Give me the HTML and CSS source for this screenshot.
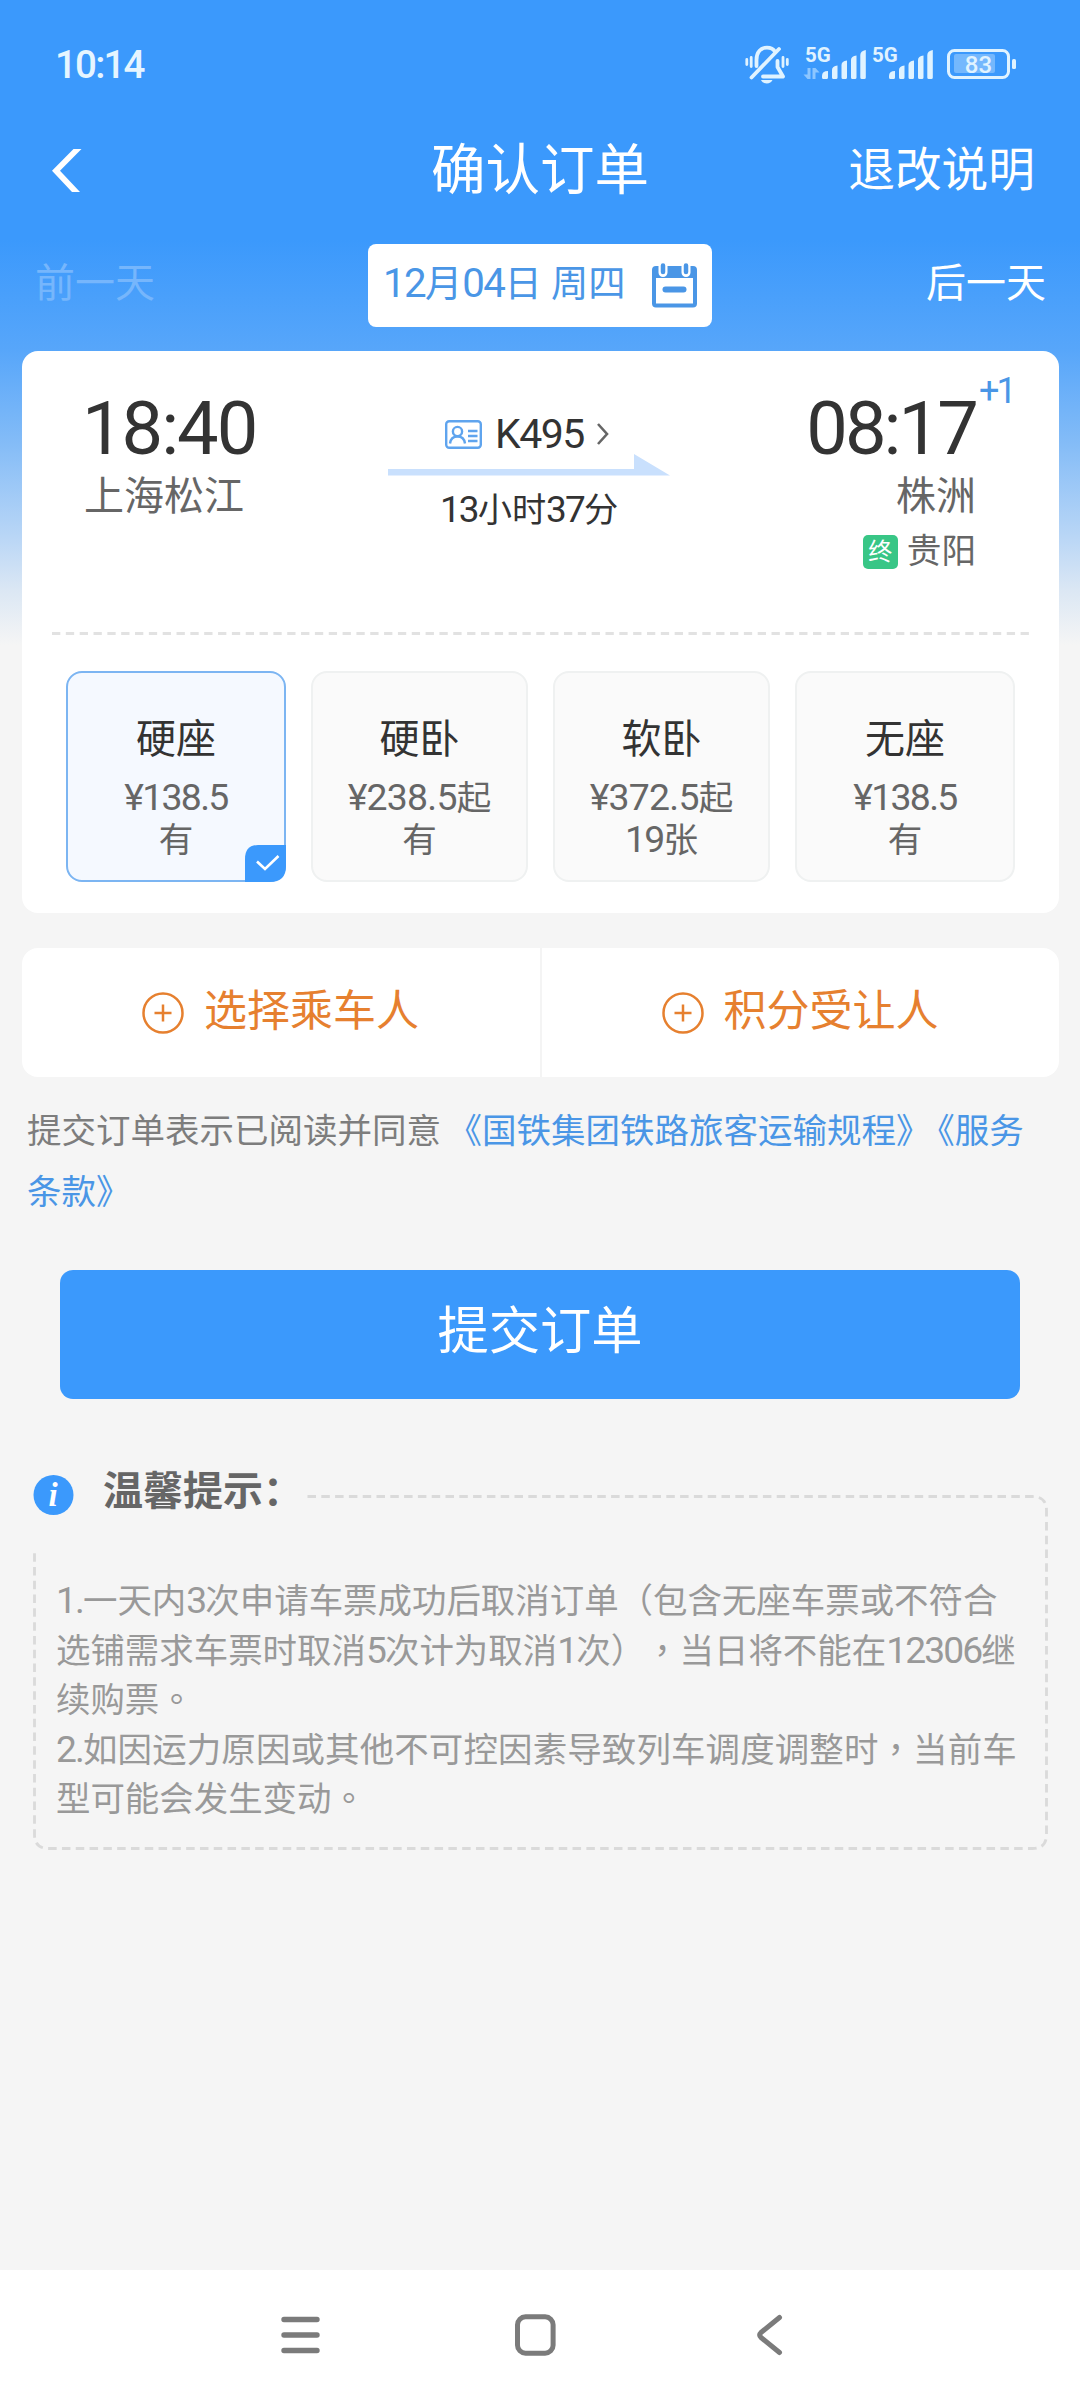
FILE: index.html
```html
<!DOCTYPE html>
<html lang="zh-CN">
<head>
<meta charset="utf-8">
<meta name="viewport" content="width=1080">
<title>确认订单</title>
<link rel="stylesheet" href="styles.css">
</head>
<body>
<div class="screen">
  <header class="status-bar">
    <span class="clock">10:14</span>
    <svg class="status-icons" width="272" height="40" viewBox="745 45 272 40" fill="none" stroke="none">
      <g stroke="#e0f3ff" stroke-width="3.8" stroke-linecap="round">
        <path d="M746.8 59.5v5M751.2 57.500v9M783 57.500v9M787.300 59.500v5" stroke-width="2.8"/>
        <path d="M756.500 66V60c0-8 4.500-12.300 10.500-12.300 3.500 0 6.500 1.500 8 4"/>
        <path d="M779 49 751.500 77.500"/>
        <path d="M777.500 61v6l5.500 9.500h-20" stroke-linejoin="round"/>
      </g>
      <path d="M761 80h11.500c-1 2.300-3 3.500-5.700 3.500s-4.800-1.200-5.800-3.500z" fill="#e0f3ff"/>
      <text class="net" x="805" y="61.800">5G</text>
      <text class="net" x="872" y="61.800">5G</text>
      <g fill="#8cc6ff">
        <path d="M807.500 68h3v11h-3l-4-4.500h4zM812.500 68h3l4 4.500h-4V79h-3z"/>
      </g>
      <g fill="#e0f3ff">
        <path d="M822 76q0-5 6-5v6.500q0 1.500-1.500 1.500h-3q-1.500 0-1.500-1.500zM832 70q0-4 5.500-4.500v12q0 1.500-1.500 1.500h-2.500q-1.500 0-1.500-1.500zM841.500 65q0-4 5.500-4.500v17q0 1.500-1.500 1.500H843q-1.500 0-1.500-1.500zM851 60q0-4 5.500-4.500v22q0 1.500-1.500 1.500h-2.500q-1.500 0-1.500-1.500zM860.300 55q0-4 5.500-5v27.500q0 1.500-1.500 1.500h-2.500q-1.500 0-1.500-1.500z"/>
        <path d="M889 76q0-5 6-5v6.500q0 1.500-1.500 1.500h-3q-1.500 0-1.500-1.500zM899 70q0-4 5.500-4.500v12q0 1.500-1.500 1.500h-2.500q-1.500 0-1.500-1.500zM908.500 65q0-4 5.500-4.500v17q0 1.500-1.500 1.500H910q-1.500 0-1.500-1.500zM918 60q0-4 5.500-4.500v22q0 1.500-1.500 1.500h-2.500q-1.500 0-1.500-1.500zM927.300 55q0-4 5.500-5v27.500q0 1.500-1.500 1.500h-2.500q-1.500 0-1.500-1.500z"/>
        <rect x="1012" y="59" width="4" height="10" rx="1.500"/>
      </g>
      <rect x="948.500" y="50.500" width="60" height="27" rx="6" stroke="#e0f3ff" stroke-width="3"/>
      <rect x="954" y="54" width="41" height="19" rx="2" fill="#74b8fd"/>
      <text class="level" x="978.500" y="73" text-anchor="middle">83</text>
    </svg>
  </header>

  <nav class="title-bar">
    <svg class="back" width="30" height="43" viewBox="0 0 30 43"><path d="M21.500 0H29.500L8 21.800 28 43H20L0 21.800z" fill="#fff"/></svg>
    <h1 class="title">确认订单</h1>
    <span class="rules">退改说明</span>
  </nav>

  <div class="date-row">
    <span class="day day-off">前一天</span>
    <div class="date-box">
      <span class="date"><span class="num">12</span>月<span class="num">04</span>日 周四</span>
      <svg width="45" height="45" viewBox="0 0 45 45">
        <rect x="2" y="5" width="41" height="37.500" rx="2" fill="#fff" stroke="#4a96e6" stroke-width="4"/>
        <path d="M2 4h41v11H2z" fill="#4a96e6"/>
        <path d="M11 1v8.500M34 1v8.500" stroke="#fff" stroke-width="9" stroke-linecap="round"/>
        <path d="M11 2.500v6.500M34 2.500v6.500" stroke="#4a96e6" stroke-width="4.500" stroke-linecap="round"/>
        <path d="M13.500 26.500h18" stroke="#4a96e6" stroke-width="6" stroke-linecap="round"/>
      </svg>
    </div>
    <span class="day">后一天</span>
  </div>

  <section class="card trip-card">
    <div class="trip">
      <div class="stop stop-start">
        <div class="time">18:40</div>
        <div class="station">上海松江</div>
      </div>
      <div class="train">
        <div class="train-no">
          <svg width="37" height="29" viewBox="0 0 37 29" fill="none" stroke="#5fa4ee" stroke-width="2.400">
            <rect x="1.200" y="1.200" width="34.600" height="26.600" rx="3"/>
            <circle cx="12.500" cy="11.500" r="4.600"/>
            <path d="M5 23.500c.5-4 3-7 7.500-7s7 3 7.500 7M23 11h9.500M23 16h9.500M23 21h9.500"/>
          </svg>
          <span class="code">K495</span>
          <svg width="12" height="22" viewBox="0 0 12 22" fill="none" stroke="#666" stroke-width="2.600"><path d="M1 1l9 10-9 10"/></svg>
        </div>
        <svg class="arrow" width="282" height="22" viewBox="0 0 282 22"><path d="M0 15h246V0l36 21.500H0z" fill="#c9e0fd"/></svg>
        <div class="duration"><span class="num">13</span>小时<span class="num">37</span>分</div>
      </div>
      <div class="stop stop-end">
        <div class="time">08:17<sup class="plus">+1</sup></div>
        <div class="station">株洲</div>
        <div class="terminal"><span class="badge">终</span>贵阳</div>
      </div>
    </div>
    <svg class="divider" width="977" height="3" viewBox="0 0 977 3"><path d="M0 1.500h977" stroke="#e2e2e2" stroke-width="3" stroke-dasharray="8.300 5.537"/></svg>
    <div class="seats">
      <div class="seat seat-on">
        <div class="seat-name">硬座</div>
        <div class="seat-info"><span class="num tight">¥138.5</span></div>
        <div class="seat-info">有</div>
        <svg class="tick" width="41" height="37" viewBox="0 0 41 37"><path d="M0 14Q0 0 13 0h28v21q0 16-16 16H0z" fill="#3b99fc"/><path d="M12 16.500l8 7.500 13.500-13" fill="none" stroke="#fff" stroke-width="2.600"/></svg>
      </div>
      <div class="seat">
        <div class="seat-name">硬卧</div>
        <div class="seat-info"><span class="num">¥238.5</span>起</div>
        <div class="seat-info">有</div>
      </div>
      <div class="seat">
        <div class="seat-name">软卧</div>
        <div class="seat-info"><span class="num">¥372.5</span>起</div>
        <div class="seat-info"><span class="num tight">19</span>张</div>
      </div>
      <div class="seat">
        <div class="seat-name">无座</div>
        <div class="seat-info"><span class="num tight">¥138.5</span></div>
        <div class="seat-info">有</div>
      </div>
    </div>
  </section>

  <section class="card people">
    <div class="pick">
      <svg width="42" height="42" viewBox="0 0 42 42" fill="none" stroke="#e6802f" stroke-width="2.500"><circle cx="21" cy="21" r="19.500"/><path d="M12.500 21h17M21 12.500v17"/></svg>
      <span>选择乘车人</span>
    </div>
    <div class="pick">
      <svg width="42" height="42" viewBox="0 0 42 42" fill="none" stroke="#e6802f" stroke-width="2.500"><circle cx="21" cy="21" r="19.500"/><path d="M12.500 21h17M21 12.500v17"/></svg>
      <span>积分受让人</span>
    </div>
  </section>

  <p class="agree">提交订单表示已阅读并同意 <a>《国铁集团铁路旅客运输规程》</a><a class="terms">《服务<br>条款》</a></p>

  <button class="submit" type="button">提交订单</button>

  <section class="tips">
    <svg class="frame" width="1017" height="356" viewBox="0 0 1017 356" fill="none" stroke="#dadada" stroke-width="2.800" stroke-dasharray="8.500 5.300">
      <path d="M274.500 1.500H999.500q14 0 14 14V339.500q0 14-14 14H15.500q-14 0-14-14V58"/>
    </svg>
    <h2 class="tips-title">
      <svg width="41" height="40" viewBox="0 0 41 40"><circle cx="20.500" cy="20" r="20" fill="#3b99fc"/><text class="info" x="20" y="31" text-anchor="middle">i</text></svg>
      <span>温馨提示：</span>
    </h2>
    <div class="tips-body">
      <div><span class="num">1.</span>一天内<span class="num">3</span>次申请车票成功后取消订单（包含无座车票或不符合</div>
      <div>选铺需求车票时取消<span class="num">5</span>次计为取消<span class="num">1</span>次）<span class="mid" lang="zh-TW">，</span>当日将不能在<span class="num">12306</span>继</div>
      <div>续购票<span class="mid" lang="zh-TW">。</span></div>
      <div class="loose"><span class="num">2.</span>如因运力原因或其他不可控因素导致列车调度调整时<span class="mid" lang="zh-TW">，</span>当前车</div>
      <div>型可能会发生变动<span class="mid" lang="zh-TW">。</span></div>
    </div>
  </section>

  <footer class="nav-keys">
    <svg width="39" height="42" viewBox="0 0 39 42" stroke="#7b7b7b" stroke-width="5.400" stroke-linecap="round"><path d="M3 5.500h33M3 21h33M3 36.500h33"/></svg>
    <svg width="41" height="42" viewBox="0 0 41 42" fill="none" stroke="#7b7b7b" stroke-width="5.000"><rect x="2.500" y="2.800" width="35.600" height="36.400" rx="8"/></svg>
    <svg width="26" height="42" viewBox="0 0 26 42" fill="none" stroke="#7b7b7b" stroke-width="5" stroke-linecap="round" stroke-linejoin="round"><path d="M22.500 3.500L4 18.500Q1.500 21 4 23.500L22.500 38.500"/></svg>
  </footer>
</div>
</body>
</html>
```
FILE: styles.css
```css
* { box-sizing: border-box; }
body {
  margin: 0;
  background: #f5f5f5;
  font-family: Roboto, "Noto Sans CJK SC", sans-serif;
  font-size: 34.6px;
  color: #333;
}
h1, h2, p { margin: 0; font-weight: 400; }
svg { display: block; flex: none; overflow: visible; }
.screen {
  display: flex;
  flex-direction: column;
  width: 1080px;
  height: 2400px;
  background: linear-gradient(#3b99fc 0, #3b99fc 240px, #57a6fa 350px, #82bbf7 440px, #bbd7f6 540px, #dbe7f4 590px, #f5f5f5 645px);
}
.num { font-size: 1.08em; line-height: 1; letter-spacing: -0.05em; }

.status-bar {
  display: flex;
  align-items: center;
  justify-content: space-between;
  height: 128px;
  padding: 0 63px 0 55px;
}
.clock { font-size: 38.500px; font-weight: 500; color: #e6f5ff; letter-spacing: -1.800px; }
.status-icons { margin-top: 2px; }
.net { font-size: 20.500px; font-weight: 700; fill: #e0f3ff; }
.level { font-size: 24px; font-weight: 500; fill: #e0f3ff; }

.title-bar {
  display: grid;
  grid-template-columns: 1fr auto 1fr;
  align-items: center;
  height: 84px;
  padding: 0 45px 0 52px;
  color: #fff;
}
.title { margin: 0 7px 0 0; font-size: 54.500px; line-height: 84px; }
.rules { justify-self: end; font-size: 46.700px; line-height: 84px; }

.date-row {
  display: grid;
  grid-template-columns: 333px 344px 1fr;
  height: 83px;
  margin: 32px 34px 0 35px;
  color: #fff;
}
.day { font-size: 40px; line-height: 79px; }
.day:last-child { justify-self: end; }
.day-off { color: #76b6fc; }
.date-box {
  display: flex;
  align-items: center;
  justify-content: space-between;
  padding: 0 15px 0 15px;
  border-radius: 8px;
  background: #fff;
}
.date { padding-bottom: 3px; font-size: 37.300px; line-height: 80px; color: #4a96e6; }
.date .num { letter-spacing: -0.04em; }

.card { margin: 0 21px 0 22px; border-radius: 16px; background: #fff; }
.trip-card { height: 562px; margin-top: 24px; }
.trip { display: grid; grid-template-columns: 366px 282px 1fr; height: 281px; }
.stop { padding: 40px 0 0 60px; }
.time { position: relative; font-size: 74px; line-height: 76px; letter-spacing: -2.900px; }
.stop-start .time { letter-spacing: -2px; }
.station { margin-top: 5px; margin-left: 2px; font-size: 40px; line-height: 50px; color: #666; }
.stop-end { display: flex; flex-direction: column; align-items: flex-end; padding: 40px 83px 0 0; }
.plus { position: absolute; left: 100%; top: -20px; margin-left: 3px; font-size: 36px; line-height: 40px; letter-spacing: -3px; color: #4a96e6; }
.terminal { display: flex; align-items: center; gap: 9px; margin-top: 4px; font-size: 34.600px; line-height: 50px; color: #666; }
.badge { width: 35px; height: 34px; margin-top: 2px; border-radius: 5px; background: #38c686; color: #fff; font-size: 24px; line-height: 35px; text-align: center; }
.train { display: flex; flex-direction: column; align-items: center; padding-top: 63px; }
.train-no { display: flex; align-items: center; gap: 13px; height: 40px; margin-right: 4px; }
.code { font-size: 41px; letter-spacing: -1.500px; }
.duration { margin-top: 12px; font-size: 34.200px; line-height: 44px; }
.divider { margin-left: 30px; }
.seats { display: grid; grid-template-columns: 220px 217px 217px 220px; gap: 25px; margin: 36px 0 0 44px; }
.seat {
  position: relative;
  height: 211px;
  padding-top: 42px;
  border: 2.500px solid #eff1f1;
  border-radius: 16px;
  background: #fafafa;
  text-align: center;
}
.seat-on { border-color: #7cb5f2; background: #f5f9ff; }
.seat-name { font-size: 40px; line-height: 50px; }
.seat-info { font-size: 34.600px; line-height: 42px; color: #666; }
.seat-info .num { letter-spacing: -0.02em; }
.seat-info .tight { letter-spacing: -0.045em; }
.seat-name + .seat-info { margin-top: 12px; }
.tick { position: absolute; right: -2px; bottom: -2px; }

.people { display: grid; grid-template-columns: 518px 1fr; height: 129px; margin-top: 35px; }
.pick { display: flex; align-items: center; justify-content: center; gap: 20px; color: #e6802f; font-size: 43px; line-height: 60px; }
.pick svg { margin: 1px 0 0 4px; }
.pick span { margin: -3px 5px 0 0; }
.pick + .pick { border-left: 2px solid #f4f4f4; }

.agree { margin: 24px 0 0 27px; font-size: 34.500px; line-height: 61px; color: #7d7d7d; white-space: nowrap; word-spacing: -2px; }
.agree a { color: #4a96e6; }
.terms { margin-left: 7px; }

.submit {
  height: 129px;
  margin: 47px 60px 0;
  padding: 0 0 17px;
  border: 0;
  border-radius: 13px;
  background: #3b99fc;
  color: #fff;
  font: inherit;
  font-size: 51.300px;
}

.tips { position: relative; margin: 66px 31px 0 33px; }
.frame { position: absolute; left: 0; top: 30px; }
.tips-title { display: flex; align-items: center; gap: 29px; height: 50px; color: #666; font-size: 40px; font-weight: 700; line-height: 50px; }
.tips-title svg { margin-top: 10px; }
.tips-title span { padding-top: 4px; }
.info { font-family: "Liberation Serif", serif; font-size: 33px; font-style: italic; font-weight: 700; fill: #fff; }
.tips-body { margin: 62px 0 0 23px; font-size: 34.450px; line-height: 49.500px; color: #999; white-space: nowrap; text-spacing-trim: space-all; }
.mid { font-family: "Noto Sans CJK TC", sans-serif; line-height: 1; }
.loose { letter-spacing: 0.150px; }

.nav-keys {
  display: grid;
  grid-template-columns: 234px 242px auto;
  height: 130px;
  margin-top: auto;
  padding: 44px 0 0 281px;
  background: #fff;
}
```
